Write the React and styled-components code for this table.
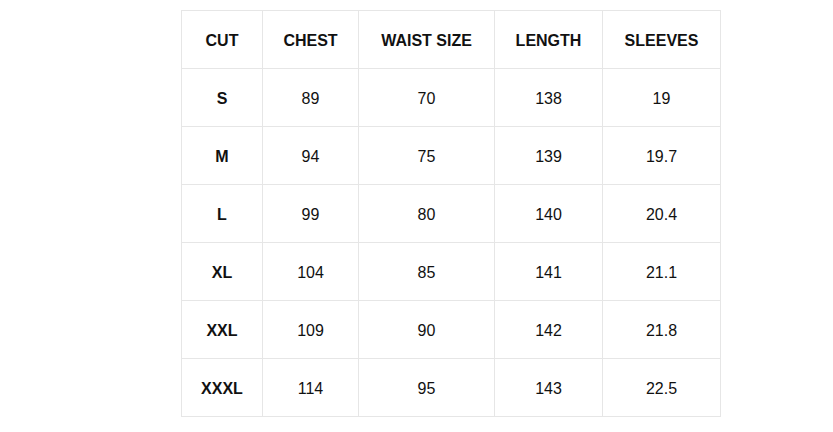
import React from 'react'
import styled, { createGlobalStyle } from 'styled-components'

const GlobalStyle = createGlobalStyle`
    body {
        margin: 0;
        background: #fff;
        font-family: "Liberation Sans", Arial, sans-serif;
    }
`

const Wrapper = styled.div`
    padding: 10px 0 0 181px;
`

const SizeTable = styled.table`
    border-collapse: collapse;
    table-layout: fixed;
    width: 539px;
    color: #111;
    font-size: 16px;
`

const Row = styled.tr`
    height: 58px;
`

const Cell = styled.td`
    border: 1px solid #e6e6e6;
    text-align: center;
    vertical-align: middle;
    padding: 2px 0 0;
    font-weight: ${props => props.$bold ? 700 : 400};
`

const widths = [81, 96, 136, 108, 118]
const headers = ['CUT', 'CHEST', 'WAIST SIZE', 'LENGTH', 'SLEEVES']
const rows = [
    ['S', '89', '70', '138', '19'],
    ['M', '94', '75', '139', '19.7'],
    ['L', '99', '80', '140', '20.4'],
    ['XL', '104', '85', '141', '21.1'],
    ['XXL', '109', '90', '142', '21.8'],
    ['XXXL', '114', '95', '143', '22.5'],
]

const App = () => {
  return (
    <Wrapper>
        <GlobalStyle />
        <SizeTable>
            <colgroup>
                {widths.map((w, i) => <col key={i} style={{ width: w }} />)}
            </colgroup>
            <tbody>
                <Row>
                    {headers.map(h => <Cell key={h} $bold>{h}</Cell>)}
                </Row>
                {rows.map(r => (
                    <Row key={r[0]}>
                        {r.map((v, i) => <Cell key={i} $bold={i === 0}>{v}</Cell>)}
                    </Row>
                ))}
            </tbody>
        </SizeTable>
    </Wrapper>
  )
}

export default App
